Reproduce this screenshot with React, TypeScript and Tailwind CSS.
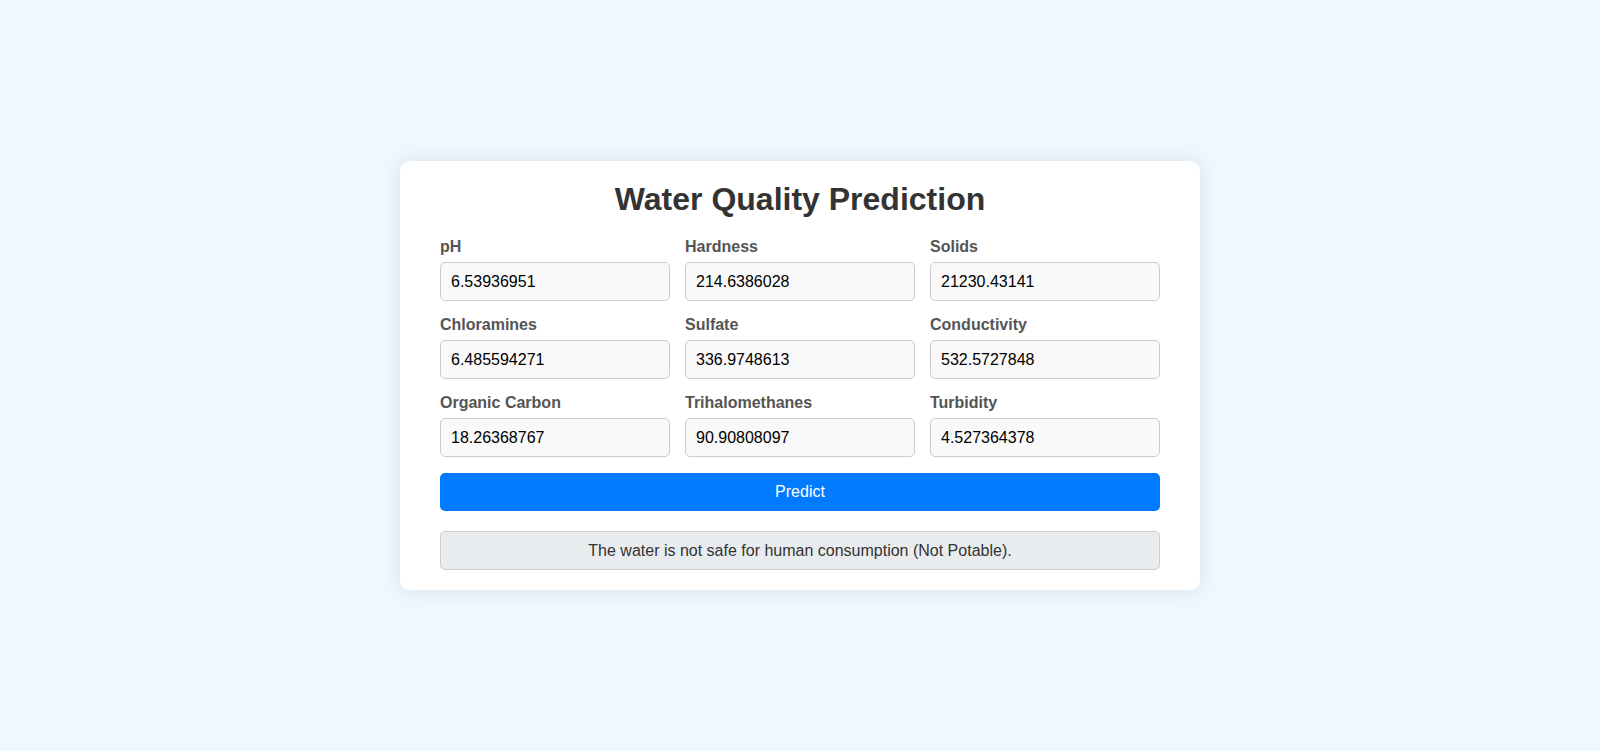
const fields = [
  { label: 'pH', value: '6.53936951' },
  { label: 'Hardness', value: '214.6386028' },
  { label: 'Solids', value: '21230.43141' },
  { label: 'Chloramines', value: '6.485594271' },
  { label: 'Sulfate', value: '336.9748613' },
  { label: 'Conductivity', value: '532.5727848' },
  { label: 'Organic Carbon', value: '18.26368767' },
  { label: 'Trihalomethanes', value: '90.90808097' },
  { label: 'Turbidity', value: '4.527364378' },
]

export default function App() {
  return (
    <div className="min-h-screen flex items-center justify-center bg-[#f0f8ff] font-['Liberation_Sans',Arial,sans-serif]">
      <div className="w-[800px] bg-white rounded-[10px] px-[40px] pt-[20px] pb-[20px] shadow-[0_0_20px_rgba(0,0,0,0.1)]">
        <h1 className="text-center text-[32px] leading-[37px] font-bold text-[#333] mb-[20px]">
          Water Quality Prediction
        </h1>
        <form onSubmit={(e) => e.preventDefault()}>
          <div className="grid grid-cols-3 gap-x-[15px] gap-y-[15px]">
            {fields.map((f) => (
              <div key={f.label}>
                <label className="block text-[16px] leading-[18px] font-bold text-[#555] mb-[6px]">
                  {f.label}
                </label>
                <input
                  type="text"
                  defaultValue={f.value}
                  className="block w-full h-[39px] px-[10px] text-[16px] text-black bg-[#f9f9f9] border border-[#ccc] rounded-[5px] outline-none"
                />
              </div>
            ))}
          </div>
          <button
            type="submit"
            className="block w-full mt-[16px] h-[38px] bg-[#007bff] text-white text-[16px] rounded-[5px]"
          >
            Predict
          </button>
        </form>
        <div className="mt-[20px] h-[39px] flex items-center justify-center bg-[#e9ecef] border border-[#ccc] rounded-[5px] text-[16px] text-[#333]">
          The water is not safe for human consumption (Not Potable).
        </div>
      </div>
    </div>
  )
}
